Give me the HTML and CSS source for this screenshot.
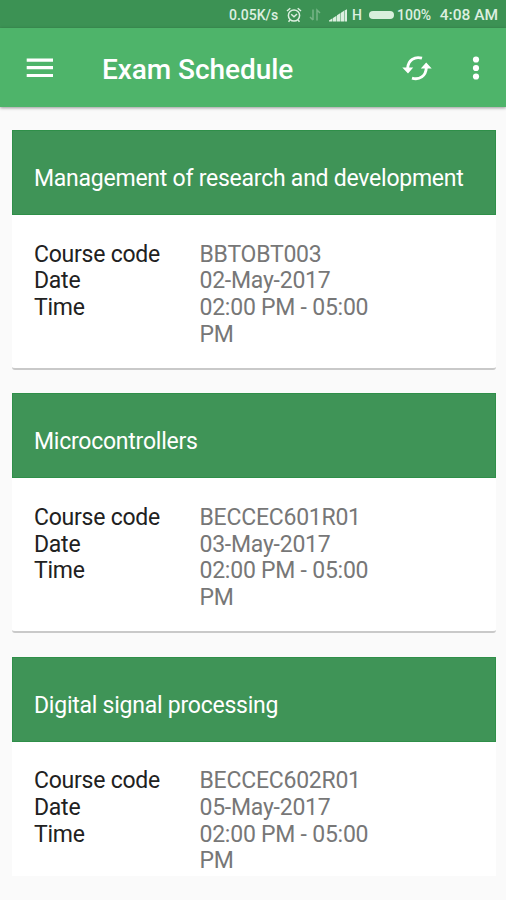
FILE: index.html
```html
<!DOCTYPE html>
<html lang="en">
<head>
<meta charset="utf-8">
<title>Exam Schedule</title>
<link rel="stylesheet" href="styles.css">
</head>
<body>
<div class="status">
  <span class="speed">0.05K/s</span>
  <svg class="alarm" width="16" height="16" viewBox="0 0 16 16" fill="none" stroke="currentColor" stroke-width="1.5"><circle cx="8" cy="8.5" r="5.6"/><path d="M1 4 4.3 1.2M15 4 11.7 1.2M5.2 7.2 8 9.7l3-2.7M4 13l-1.5 1.8M12 13l1.5 1.8"/></svg>
  <svg class="arrows" width="12" height="14" viewBox="0 0 12 14" fill="none" stroke="currentColor" stroke-width="1.5"><path d="M4 1.5v10.5M1 9l3 3M8 12.500V2l3 3"/></svg>
  <svg class="signal" width="19" height="13" viewBox="0 0 19 13" fill="currentColor"><path d="M0 12.500V11.500l3.500-2.300v3.300zM4 12.500V9l3.500-2.300v5.800zM8 12.500V6.300l3.500-2.300v8.500zM12 12.500V3.700l3-2v10.800zM15.500 12.500V1.400l2.500-1.200v12.300z"/></svg>
  <span class="network">H</span>
  <span class="battery"></span>
  <span class="percent">100%</span>
  <span class="clock">4:08 AM</span>
</div>
<header class="appbar">
  <svg class="menu" width="28" height="20" viewBox="0 0 28 20" fill="currentColor"><path d="M.7 .5h26.300v3.200H.7zM.7 8.100h26.300v3.200H.7zM.7 15.900h26.300v3.200H.7z"/></svg>
  <h1>Exam Schedule</h1>
  <svg class="refresh" width="32" height="26" viewBox="0 0 32 26"><path d="M21 3.200C13.500 1 7.200 5.400 6.700 13M11 23.200C18.500 25.400 24.800 21 25.300 13" fill="none" stroke="currentColor" stroke-width="2.900"/><path d="M1.300 12.500h10.900l-5.200 6zM19.800 13.500h10.900L25.200 7.500z" fill="currentColor"/></svg>
  <svg class="more" width="8" height="26" viewBox="0 0 8 26" fill="currentColor"><circle cx="4" cy="4.500" r="3.100"/><circle cx="4" cy="13" r="3.100"/><circle cx="4" cy="21.500" r="3.100"/></svg>
</header>
<main class="list">
  <section class="card">
    <h2>Management of research and development</h2>
    <dl><dt>Course code</dt><dd>BBTOBT003</dd><dt>Date</dt><dd>02-May-2017</dd><dt>Time</dt><dd>02:00 PM - 05:00 PM</dd></dl>
  </section>
  <section class="card">
    <h2>Microcontrollers</h2>
    <dl><dt>Course code</dt><dd>BECCEC601R01</dd><dt>Date</dt><dd>03-May-2017</dd><dt>Time</dt><dd>02:00 PM - 05:00 PM</dd></dl>
  </section>
  <section class="card">
    <h2>Digital signal processing</h2>
    <dl><dt>Course code</dt><dd>BECCEC602R01</dd><dt>Date</dt><dd>05-May-2017</dd><dt>Time</dt><dd>02:00 PM - 05:00 PM</dd></dl>
  </section>
</main>
</body>
</html>
```
FILE: styles.css
```css
* { box-sizing: border-box; }
body {
  margin: 0;
  height: 900px;
  overflow: hidden;
  background: #fafafa;
  font-family: Roboto, "Liberation Sans", sans-serif;
}
.status {
  display: flex;
  align-items: center;
  height: 28px;
  padding: 2px 8px 0 229px;
  background: #3c9254;
  color: #dcefe0;
  font-size: 14px;
  font-weight: 500;
  white-space: nowrap;
}
.status svg { flex: none; }
.speed { width: 57px; }
.arrows { margin-left: 7px; color: #76b486; }
.signal { margin-left: 8px; }
.network { margin-left: 4px; width: 17px; }
.battery { width: 25px; height: 8px; border-radius: 4px; background: #d8efdc; }
.percent { margin-left: 3px; }
.clock { margin-left: auto; font-size: 15.500px; }
.appbar {
  position: relative;
  display: flex;
  align-items: center;
  height: 79px;
  padding: 1px 26px 0;
  background: #4eb46a;
  color: #fff;
  box-shadow: 0 1px 3px rgba(0, 0, 0, .4);
}
.appbar h1 {
  flex: 1;
  margin: 4px 0 0 48px;
  font-size: 28px;
  line-height: 34px;
  font-weight: 500;
  letter-spacing: -.05px;
}
.refresh { margin-right: 39px; }
.list {
  display: flex;
  flex-direction: column;
  gap: 23.400px;
  height: 769px;
  padding: 23px 10.500px 0 12px;
  overflow: hidden;
}
.card {
  flex: none;
  height: 240px;
  background: #fff;
  border-bottom: 2px solid #c9c9c9;
  border-radius: 0 0 3px 3px;
}
.card h2 {
  height: 85px;
  margin: 0;
  padding: 34px 21px 0;
  border: 1px solid #2f8f49;
  background: #3f9457;
  color: #fff;
  font-size: 23px;
  line-height: 27px;
  font-weight: 400;
  letter-spacing: -.240px;
  white-space: nowrap;
}
.card dl {
  display: grid;
  grid-template-columns: 165.500px 180px;
  margin: 0;
  padding: 26.500px 22px 0;
  font-size: 23px;
  line-height: 26.700px;
  letter-spacing: -.240px;
}
.card dt { color: #212121; }
.card dd { margin: 0; color: #777; }
```
